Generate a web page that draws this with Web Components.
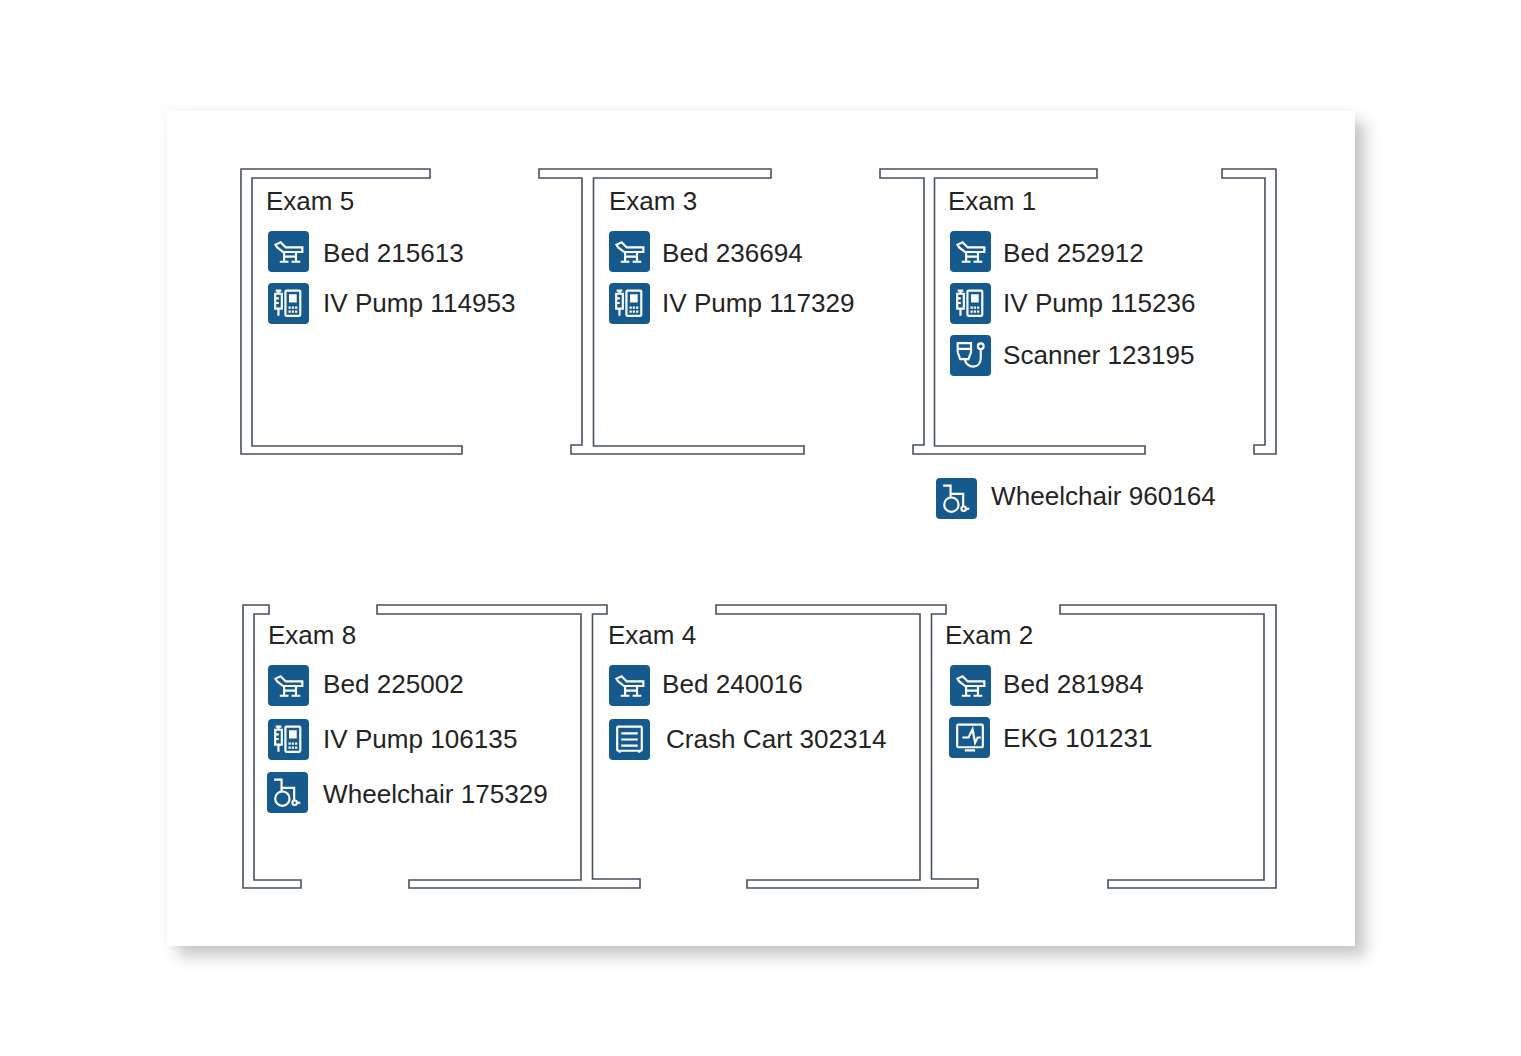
<!DOCTYPE html>
<html lang="en">
<head>
<meta charset="utf-8">
<title>Floor plan</title>
<style>
    html, body { margin: 0; background: #fff; }
    body {
        box-sizing: border-box;
        height: 1056px;
        padding: 111px 0 0 167px;
        font-family: "Liberation Sans", Arial, sans-serif;
        color: #242424;
    }
</style>
</head>
<body>
<floor-plan>
    <floor-row columns="343px 339px 300px" offset="99px" height="292px">
        <exam-room name="Exam 5">
            <asset-item icon="bed" label="Bed 215613" inset="2px" gap="14px" nudge="1"></asset-item>
            <asset-item icon="pump" label="IV Pump 114953" inset="2px" gap="14px" top="11px" nudge="-1"></asset-item>
        </exam-room>
        <exam-room name="Exam 3">
            <asset-item icon="bed" label="Bed 236694" nudge="1"></asset-item>
            <asset-item icon="pump" label="IV Pump 117329" top="11px" nudge="-1"></asset-item>
        </exam-room>
        <exam-room name="Exam 1">
            <asset-item icon="bed" label="Bed 252912" inset="2px" nudge="1"></asset-item>
            <asset-item icon="pump" label="IV Pump 115236" inset="2px" top="11px" nudge="-1"></asset-item>
            <asset-item icon="scanner" label="Scanner 123195" inset="2px" top="11px" nudge="-1"></asset-item>
        </exam-room>
    </floor-row>
    <asset-item icon="wheelchair" label="Wheelchair 960164" inset="769px" gap="14px" nudge="-3"></asset-item>
    <floor-row columns="340px 337px 300px" offset="101px" top="101px">
        <exam-room name="Exam 8">
            <asset-item icon="bed" label="Bed 225002" gap="14px" nudge="-2"></asset-item>
            <asset-item icon="pump" label="IV Pump 106135" gap="14px" top="13px" nudge="-1"></asset-item>
            <asset-item icon="wheelchair" label="Wheelchair 175329" inset="-1px" gap="15px" top="12px" nudge="1"></asset-item>
        </exam-room>
        <exam-room name="Exam 4">
            <asset-item icon="bed" label="Bed 240016" inset="1px" nudge="-2"></asset-item>
            <asset-item icon="cart" label="Crash Cart 302314" inset="1px" gap="16px" top="13px" nudge="-1"></asset-item>
        </exam-room>
        <exam-room name="Exam 2">
            <asset-item icon="bed" label="Bed 281984" inset="5px" nudge="-2"></asset-item>
            <asset-item icon="ekg" label="EKG 101231" inset="4px" gap="13px" top="11px"></asset-item>
        </exam-room>
    </floor-row>
</floor-plan>

<script>
// wall outlines, in page coordinates (the svg viewBox starts at the card corner)
const WALLS = [
    'M430 169H241V454H462V446H252V178H430Z',
    'M539 169H771V178H593.5V446H804V454H571V445H582V178H539Z',
    'M880 169H1097V178H934.5V446H1145V454H913V445H924V178H880Z',
    'M1222 169H1276V454H1254V445H1265V178H1222Z',
    'M243 605H269V614H254V880H301V888H243Z',
    'M377 605H607V614H592.5V879H640V888H409V880H581V614H377Z',
    'M716 605H946V614H931.5V879H978V888H747V880H920V614H716Z',
    'M1060 605H1276V888H1108V880H1264V614H1060Z',
];

const ICONS = {
    bed: `
        <path d="M7.300 13.300 12.300 11l5 5H33.500V20.500H14.700L9 16Z"/>
        <path d="M15.700 20.500V30M27.300 20.500V30M15.700 25H27.300M11.500 30H20M23 30h8.500"/>`,
    pump: `
        <path d="M7.500 7.500h5.500M10.200 7.500v3M7 10.500h6.500v14.500H7ZM10.200 25v7M7 15h3.500M7 19.500h3.500"/>
        <rect x="17" y="7.500" width="14.500" height="24.500" rx="1"/>
        <rect x="20.500" y="11" width="7.500" height="8" fill="#fff" stroke="none"/>
        <path d="M20 24h2.200M23.200 24h2.200M26.400 24h2.200M20 28h2.200M23.200 28h2.200M26.400 28h2.200"/>`,
    scanner: `
        <path d="M7.500 8h13v9l-2.500 6.500h-8L7.500 17ZM7.500 13.500h13"/>
        <path d="M14.500 23.500c1 9.500 15.500 10.500 15.500-1V14"/>
        <circle cx="30" cy="11" r="2.800"/>`,
    wheelchair: `
        <path d="M7 7.500h7.200V19M14.200 15.500H26.500V28"/>
        <circle cx="15" cy="26" r="7"/>
        <circle cx="27" cy="30" r="2.200"/>
        <path d="M29 30h3.500"/>`,
    cart: `
        <rect x="8" y="7.500" width="24" height="23.500" rx="1"/>
        <path d="M12 14h16M12 20h16M12 26h16M10.500 31v2M29.500 31v2"/>`,
    ekg: `
        <rect x="8" y="7.500" width="25" height="22" rx="1"/>
        <path d="M13 20h6l4-8 2.500 13 2.500-5h3M15.500 32.500h10"/>`,
};

class FloorPlan extends HTMLElement {

    static template() {
        const walls = WALLS.map(d => `<path d="${d}"/>`).join('');
        return `
            <style>
                :host {
                    display: block;
                    position: relative;
                    box-sizing: border-box;
                    width: 1188px;
                    height: 835px;
                    padding-top: 75px;
                    background: #fff;
                    box-shadow: 11px 11px 14px rgba(0, 0, 0, .2), 0 0 12px rgba(0, 0, 0, .06);
                }
                svg {
                    position: absolute;
                    left: 0;
                    top: 0;
                    width: 1188px;
                    height: 835px;
                    fill: none;
                    stroke: #46525d;
                    stroke-width: 1.6;
                }
                .content { position: relative; display: flex; flex-direction: column; }
            </style>
            <svg viewBox="167 111 1188 835" aria-hidden="true">${walls}</svg>
            <div class="content"><slot></slot></div>
        `;
    }

    connectedCallback() {
        this.attachShadow({ mode: 'open' });
        this.shadowRoot.innerHTML = FloorPlan.template();
    }
}

class FloorRow extends HTMLElement {

    connectedCallback() {
        this.attachShadow({ mode: 'open' });
        this.shadowRoot.innerHTML = `
            <style>
                :host {
                    display: grid;
                    grid-template-columns: ${this.getAttribute('columns')};
                    margin-left: ${this.getAttribute('offset') || 0};
                    margin-top: ${this.getAttribute('top') || 0};
                    min-height: ${this.getAttribute('height') || 0};
                }
            </style>
            <slot></slot>
        `;
    }
}

class ExamRoom extends HTMLElement {

    connectedCallback() {
        this.attachShadow({ mode: 'open' });
        this.shadowRoot.innerHTML = `
            <style>
                :host { display: flex; flex-direction: column; }
                h2 {
                    margin: 0 0 15px;
                    font: 400 26px/30px "Liberation Sans", Arial, sans-serif;
                }
            </style>
            <h2>${this.getAttribute('name')}</h2>
            <slot></slot>
        `;
    }
}

class AssetItem extends HTMLElement {

    connectedCallback() {
        this.attachShadow({ mode: 'open' });
        const shapes = ICONS[this.getAttribute('icon')];
        // nudge: the labels sit a pixel or so off the icon centre in the reference
        const nudge = Number(this.getAttribute('nudge') || 0);
        this.shadowRoot.innerHTML = `
            <style>
                :host {
                    display: flex;
                    align-items: center;
                    height: 41px;
                    margin-left: ${this.getAttribute('inset') || 0};
                    margin-top: ${this.getAttribute('top') || 0};
                }
                .icon {
                    flex: none;
                    width: 41px;
                    height: 41px;
                    border-radius: 4px;
                    background: #165a8d;
                    margin-right: ${this.getAttribute('gap') || '12px'};
                }
                svg {
                    display: block;
                    width: 41px;
                    height: 41px;
                    fill: none;
                    stroke: #fff;
                    stroke-width: 2.1;
                }
                span {
                    font-size: 26.1px;
                    line-height: 30px;
                    white-space: nowrap;
                    transform: translateY(${nudge}px);
                }
            </style>
            <div class="icon"><svg viewBox="0 0 40 40" aria-hidden="true">${shapes}</svg></div>
            <span>${this.getAttribute('label')}</span>
        `;
    }
}

customElements.define('floor-plan', FloorPlan);
customElements.define('floor-row', FloorRow);
customElements.define('exam-room', ExamRoom);
customElements.define('asset-item', AssetItem);
</script>
</body>
</html>
